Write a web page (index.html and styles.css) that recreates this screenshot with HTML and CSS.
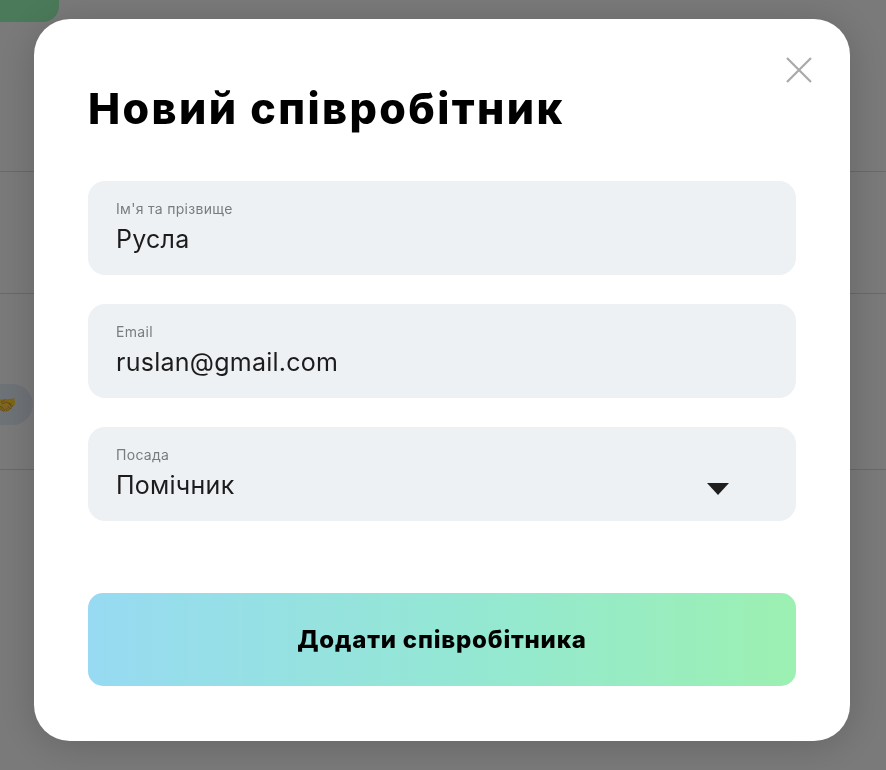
FILE: index.html
```html
<!DOCTYPE html>
<html lang="uk">
<head>
<meta charset="utf-8">
<title>Новий співробітник</title>
<link rel="stylesheet" href="styles.css">
</head>
<body>
<div class="page">
  <div class="tab"></div>
  <div class="rows">
    <div class="row r1"></div>
    <div class="row r2"></div>
    <div class="row r3"><span class="pill"><span class="emoji">🤝</span></span></div>
  </div>
</div>
<div class="overlay"></div>
<div class="modal">
  <button class="close" aria-label="Закрити">
    <svg width="26" height="26" viewBox="0 0 26 26"><path d="M1 1L25 25M25 1L1 25" stroke="#a9a9a9" stroke-width="2.2" fill="none"/></svg>
  </button>
  <h1 class="title">Новий співробітник</h1>
  <div class="fields">
    <div class="field">
      <span class="label">Ім'я та прізвище</span>
      <span class="value">Русла</span>
    </div>
    <div class="field">
      <span class="label">Email</span>
      <span class="value">ruslan@gmail.com</span>
    </div>
    <div class="field select">
      <div class="select-text">
        <span class="label">Посада</span>
        <span class="value">Помічник</span>
      </div>
      <svg class="arrow" width="22" height="12" viewBox="0 0 22 12"><path d="M0 0H22L11 12Z" fill="#1f1f1f"/></svg>
    </div>
  </div>
  <button class="submit">Додати співробітника</button>
</div>
</body>
</html>
```
FILE: styles.css
```css
html, body {
  margin: 0;
  padding: 0;
}
body {
  width: 886px;
  height: 770px;
  overflow: hidden;
  background: #f4f4f4;
  font-family: Inter, "Noto Sans", sans-serif;
}
.page {
  height: 770px;
}
.tab {
  width: 59px;
  height: 22px;
  background: #96f4b4;
  border-bottom-right-radius: 16px;
}
.row {
  border-bottom: 1px solid #d2d2d2;
}
.r1 { height: 149px; }
.r2 { height: 121px; }
.r3 {
  height: 175px;
  display: flex;
  align-items: flex-start;
}
.pill {
  margin-top: 90px;
  width: 33px;
  height: 41px;
  border-radius: 0 21px 21px 0;
  background: #dde6ee;
  display: flex;
  align-items: center;
  justify-content: flex-end;
  overflow: hidden;
}
.emoji {
  font-size: 18px;
  margin-right: 17px;
  margin-left: -20px;
  line-height: 1;
  opacity: 0.85;
}
.overlay {
  position: fixed;
  inset: 0;
  background: rgba(0, 0, 0, 0.5);
}
.modal {
  position: fixed;
  left: 34px;
  top: 19px;
  width: 816px;
  height: 722px;
  box-sizing: border-box;
  background: #fff;
  border-radius: 36px;
  padding: 59px 54px 0 54px;
  box-shadow: 0 4px 40px rgba(0, 0, 0, 0.18);
}
.close {
  position: absolute;
  right: 38px;
  top: 38px;
  border: 0;
  background: none;
  padding: 0;
  width: 26px;
  height: 26px;
  display: block;
}
.close svg { display: block; }
.title {
  margin: 0;
  font-family: Inter, "Liberation Sans", sans-serif;
  font-size: 43px;
  font-weight: 800;
  letter-spacing: 2.4px;
  color: #000;
  line-height: 60px;
}
.fields {
  margin-top: 43px;
  display: flex;
  flex-direction: column;
  gap: 29px;
}
.field {
  height: 94px;
  box-sizing: border-box;
  background: #eef1f4;
  border-radius: 17px;
  padding: 19px 28px 0;
  display: flex;
  flex-direction: column;
}
.label {
  font-size: 14px;
  line-height: 17px;
  letter-spacing: 0.3px;
  color: #787c80;
}
.value {
  margin-top: 6px;
  font-size: 25px;
  line-height: 32px;
  letter-spacing: 0.25px;
  color: #1c1c1c;
}
.select {
  flex-direction: row;
  align-items: flex-start;
  justify-content: space-between;
  padding-right: 67px;
}
.select-text {
  display: flex;
  flex-direction: column;
}
.arrow {
  margin-top: 37px;
  display: block;
}
.submit {
  margin-top: 72px;
  width: 100%;
  height: 93px;
  border: 0;
  border-radius: 15px;
  background: linear-gradient(90deg, #97daf2 0%, #94e8d2 55%, #9cf0b1 100%);
  font-family: Inter, "Liberation Sans", sans-serif;
  font-size: 24px;
  font-weight: 800;
  letter-spacing: 0.8px;
  color: #000;
  display: block;
}
```
